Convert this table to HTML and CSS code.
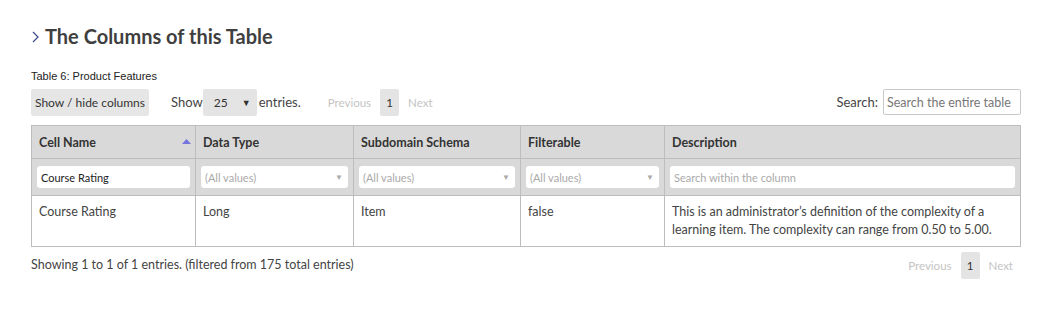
FILE: index.html
```html
<!DOCTYPE html>
<html>
<head>
<meta charset="utf-8">
<link rel="stylesheet" href="styles.css">
</head>
<body>
<div class="page">
  <h2 class="title"><svg class="chev" width="7" height="12" viewBox="0 0 7 12"><polyline points="1,1 6,6 1,11" fill="none" stroke="#3a4a8a" stroke-width="1.2"/></svg>The Columns of this Table</h2>
  <div class="caption">Table 6: Product Features</div>
  <div class="controls">
    <div class="left">
      <button class="btn">Show / hide columns</button>
      <div class="length">Show <span class="sel">25<span class="arr">▼</span></span> entries.</div>
      <div class="pager"><span class="pg dis">Previous</span><span class="pg cur">1</span><span class="pg dis">Next</span></div>
    </div>
    <div class="search">Search: <span class="sinput">Search the entire table</span></div>
  </div>
  <table class="tbl">
    <colgroup>
      <col style="width:164px"><col style="width:158px"><col style="width:167px"><col style="width:144px"><col>
    </colgroup>
    <thead>
      <tr class="hrow">
        <th><div class="thc">Cell Name<svg class="sort" width="9" height="5" viewBox="0 0 9 5"><polygon points="0,5 4.5,0 9,5" fill="#7474dc"/></svg></div></th>
        <th>Data Type</th>
        <th>Subdomain Schema</th>
        <th>Filterable</th>
        <th>Description</th>
      </tr>
      <tr class="frow">
        <td><div class="fin val">Course Rating</div></td>
        <td><div class="fin ph">(All values)<span class="darr">▼</span></div></td>
        <td><div class="fin ph">(All values)<span class="darr">▼</span></div></td>
        <td><div class="fin ph">(All values)<span class="darr">▼</span></div></td>
        <td><div class="fin ph">Search within the column</div></td>
      </tr>
    </thead>
    <tbody>
      <tr class="brow">
        <td>Course Rating</td>
        <td>Long</td>
        <td>Item</td>
        <td>false</td>
        <td>This is an administrator’s definition of the complexity of a learning item. The complexity can range from 0.50 to 5.00.</td>
      </tr>
    </tbody>
  </table>
  <div class="footer">
    <div class="info">Showing 1 to 1 of 1 entries. (filtered from 175 total entries)</div>
    <div class="pager"><span class="pg dis">Previous</span><span class="pg cur">1</span><span class="pg dis">Next</span></div>
  </div>
</div>
</body>
</html>
```
FILE: styles.css
```css
* { box-sizing: border-box; }
body { margin: 0; background: #fff; font-family: Lato, "Open Sans", sans-serif; color: #333; }
.page { width: 1054px; padding: 24px 0 0 31px; }
.title { margin: 0; font-size: 20px; font-weight: 700; color: #3f3f3f; display: flex; align-items: center; height: 24px; }
.chev { margin: 1px 6px 0 1px; flex: none; }
.caption { margin-top: 22px; font-family: "Liberation Sans", Arial, sans-serif; font-size: 11px; color: #222; height: 13px; }
.controls { width: 990px; display: flex; justify-content: space-between; align-items: center; margin-top: 5px; height: 28px; }
.left { display: flex; align-items: center; }
.btn { font-family: Lato, sans-serif; font-size: 12px; color: #333; background: #e6e6e6; border: none; border-radius: 2px; height: 27px; width: 118px; padding: 0; }
.length { margin-left: 22px; font-size: 13px; color: #444; display: flex; align-items: center; }
.sel { display: inline-flex; align-items: center; justify-content: space-between; background: #e4e4e4; border-radius: 2px; width: 54px; height: 27px; margin: 0 2px 0 0; padding: 0 6px 0 11px; font-size: 12px; color: #333; }
.arr { font-size: 9px; color: #333; }
.pager { display: flex; align-items: center; font-size: 11.5px; }
.left .pager { margin-left: 27px; }
.pg { padding: 0 9px; }
.pg.dis { color: #c4c4c4; }
.pg.cur { background: #e4e4e4; color: #333; height: 27px; width: 19px; padding: 0; display: flex; align-items: center; justify-content: center; border-radius: 2px; }
.pg.dis:first-child { padding-left: 0; }
.pg.dis:last-child { padding-right: 0; }
.search { font-size: 13px; color: #444; display: flex; align-items: center; }
.sinput { margin-left: 5px; width: 138px; height: 26px; border: 1px solid #c8c8c8; border-radius: 2px; padding: 0 3px; font-size: 12.5px; color: #777; display: flex; align-items: center; }
.tbl { margin-top: 9px; width: 990px; border-collapse: collapse; table-layout: fixed; font-size: 12.5px; }
.tbl th, .tbl td { border: 1px solid #bdbdbd; text-align: left; vertical-align: top; }
.hrow th { background: #d9d9d9; height: 33px; padding: 0 7px; vertical-align: middle; font-weight: 700; color: #333; font-size: 12.5px; }
.thc { display: flex; justify-content: space-between; align-items: center; }
.sort { margin-right: -3px; margin-top: -2px; }
.frow td { background: #d9d9d9; height: 37px; padding: 0 5px; vertical-align: middle; }
.fin { background: #fff; border-radius: 3px; height: 22px; display: flex; align-items: center; justify-content: space-between; padding: 0 5px 0 4px; font-size: 11px; }
.fin.val { color: #222; }
.fin.ph { color: #aaa; }
.darr { font-size: 8px; color: #aaa; }
.brow td { padding: 7px 7px 7px; line-height: 18px; color: #444; height: 51px; }
.footer { width: 990px; display: flex; justify-content: space-between; align-items: center; margin-top: 5px; }
.footer .pager { padding-right: 8px; }
.info { font-size: 12.5px; color: #444; margin-top: -3px; }
```
